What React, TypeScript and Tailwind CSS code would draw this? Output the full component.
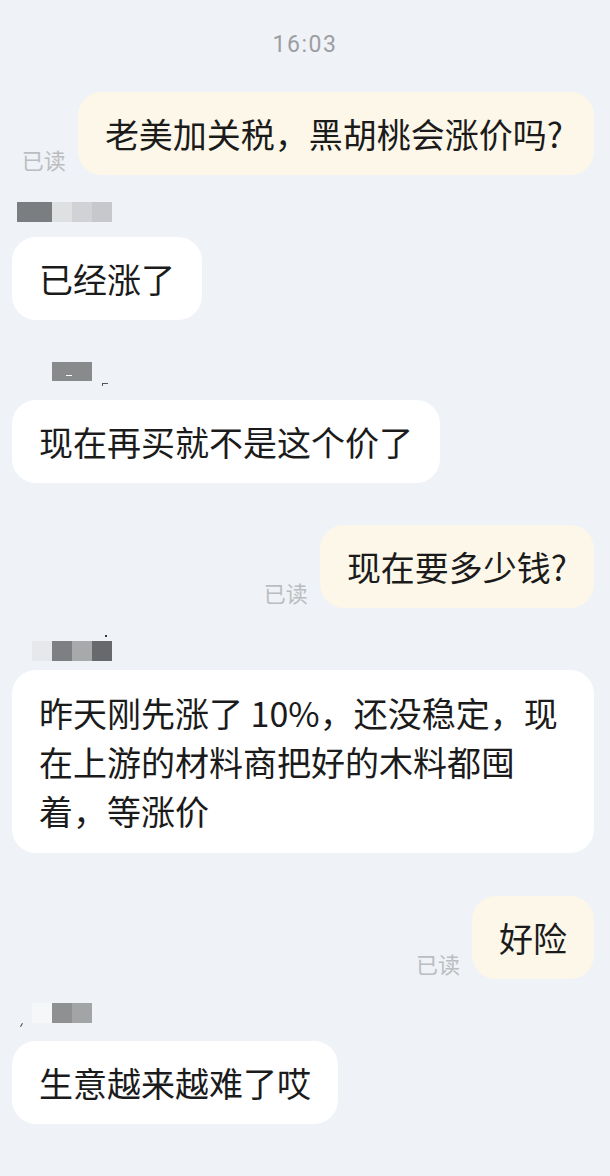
const FONT = "font-['Noto_Sans_CJK_SC','Noto_Sans',sans-serif]"

type Block = { w: number; color: string }

function Mosaic({ left, blocks, height = 20 }: { left: number; blocks: Block[]; height?: number }) {
  return (
    <div className="flex" style={{ marginLeft: left, height }}>
      {blocks.map((b, i) => (
        <div key={i} style={{ width: b.w, backgroundColor: b.color }} />
      ))}
    </div>
  )
}

function LeftBubble({ text, mt, wide = false }: { text: string; mt: number; wide?: boolean }) {
  return (
    <div className="flex pl-[12px] pr-[16px]" style={{ marginTop: mt }}>
      <div
        className={
          "rounded-[24px] bg-white px-[27px] py-[17px] text-[34px] leading-[49px] text-[#1b1b1b] " +
          (wide ? "w-[582px] py-[18px]" : "")
        }
      >
        {text}
      </div>
    </div>
  )
}

function RightBubble({ text, mt, wider = false }: { text: string; mt: number; wider?: boolean }) {
  return (
    <div className="flex items-end justify-end gap-[12px] pr-[16px]" style={{ marginTop: mt }}>
      <span className="mb-[2px] text-[22px] leading-[28px] text-[#bbbdc1]">已读</span>
      <div
        className={
          "rounded-[24px] bg-[#fdf7e9] py-[17px] text-[34px] leading-[49px] text-[#1b1b1b] " +
          (wider ? "pl-[27px] pr-[31px]" : "px-[27px]")
        }
      >
        {text}
      </div>
    </div>
  )
}

export default function App() {
  return (
    <div className={"flex h-[1176px] w-[610px] flex-col overflow-hidden bg-[#eff2f6] " + FONT}>
      <div className="mt-[31px] h-[28px] text-center font-['Roboto',sans-serif] text-[23px] leading-[28px] tracking-[1.5px] text-[#9c9ea2]">
        16:03
      </div>

      <RightBubble text="老美加关税，黑胡桃会涨价吗?" mt={33} wider />

      <div className="mt-[27px]">
        <Mosaic
          left={17}
          blocks={[
            { w: 35, color: "#7b7e81" },
            { w: 20, color: "#dfe0e2" },
            { w: 20, color: "#d0d2d5" },
            { w: 20, color: "#c6c8cb" },
          ]}
        />
      </div>
      <LeftBubble text="已经涨了" mt={15} />

      <div className="relative mt-[42px] h-[20px]">
        <Mosaic left={52} height={19} blocks={[{ w: 40, color: "#898a8c" }]} />
        <div className="absolute left-[66px] top-[13px] h-[1px] w-[6px] bg-white" />
        <div className="absolute left-[102px] top-[21px] h-[3px] w-[6px] border-l border-t border-[#555]" />
      </div>
      <LeftBubble text="现在再买就不是这个价了" mt={18} />

      <RightBubble text="现在要多少钱?" mt={42} />

      <div className="relative mt-[33px]">
        <Mosaic
          left={32}
          blocks={[
            { w: 20, color: "#e6e8eb" },
            { w: 20, color: "#7d7f82" },
            { w: 20, color: "#a8a9ab" },
            { w: 20, color: "#67696c" },
          ]}
        />
        <div className="absolute left-[105px] top-[-6px] h-[2px] w-[2px] bg-[#333]" />
      </div>
      <LeftBubble text="昨天刚先涨了 10%，还没稳定，现在上游的材料商把好的木料都囤着，等涨价" mt={9} wide />

      <RightBubble text="好险" mt={43} />

      <div className="relative mt-[24px]">
        <Mosaic
          left={32}
          blocks={[
            { w: 20, color: "#f6f7f9" },
            { w: 20, color: "#8f9092" },
            { w: 20, color: "#a3a4a6" },
          ]}
        />
        <div className="absolute left-[21px] top-[20px] h-[4px] w-[1px] rotate-[30deg] bg-[#444]" />
      </div>
      <LeftBubble text="生意越来越难了哎" mt={18} />
    </div>
  )
}
